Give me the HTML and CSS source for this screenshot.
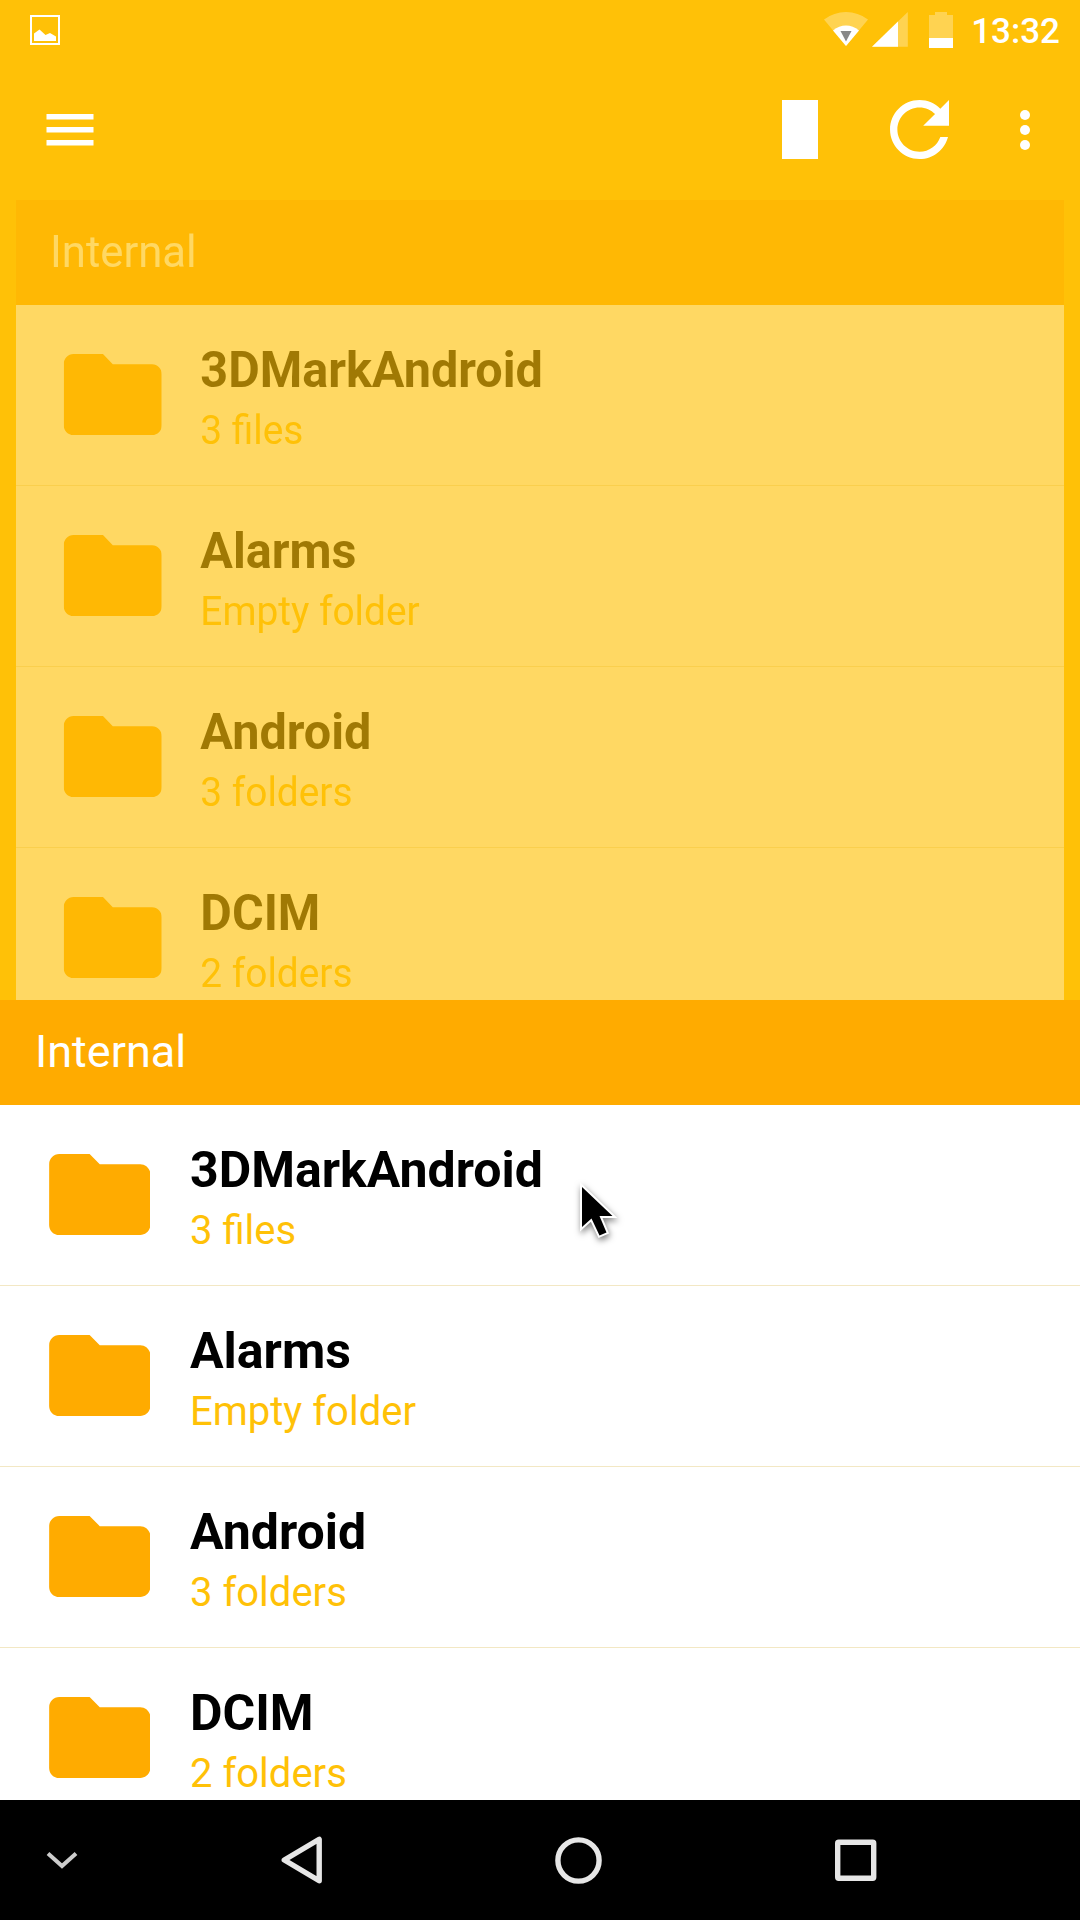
FILE: index.html
```
<!DOCTYPE html>
<html lang="en">

<head>
    <meta charset="UTF-8">
    <title>Internal</title>
    <link rel="stylesheet" href="styles.css">
</head>

<body>
    <!-- shared icons -->
    <svg class="defs" width="0" height="0">
        <symbol id="folder" viewBox="2 4 20 16">
            <path d="M10 4H4c-1.1 0-1.99.9-1.99 2L2 18c0 1.1.9 2 2 2h16c1.1 0 2-.9 2-2V8c0-1.1-.9-2-2-2h-8l-2-2z" />
        </symbol>
    </svg>

    <div class="screen">
        <header class="top">
            <div class="status-bar">
                <svg class="picture" width="30" height="30" viewBox="0 0 30 30">
                    <rect x="1" y="1" width="28" height="28" fill="none" stroke="#fff" stroke-width="2" />
                    <path d="M4 26V18.500L9.500 14.500L15.500 20L20 18L26 21.500V26Z" fill="#fff" />
                </svg>
                <svg class="signals" width="131" height="38" viewBox="823 11 131 38">
                    <path class="dim" d="M824 19.500Q834 12 846 12T868 19.500L846 46Z" />
                    <path class="lit" d="M833 30.500Q839 25.500 846 25.500T859 30.500L846 46Z" />
                    <path fill="#888" d="M840.500 31H851.500L846 41.500Z" />
                    <path class="dim" d="M872 46.800L907.800 12V46.800Z" />
                    <path class="lit" d="M872 46.800L898 21.500V46.800Z" />
                    <path class="dim" d="M929 15h6v-3h12v3h6v23h-24Z" />
                    <path class="lit" d="M929 38h24v10h-24Z" />
                </svg>
                <span class="clock">13:32</span>
            </div>
            <div class="app-bar">
                <svg class="menu" width="48" height="34" viewBox="0 0 48 34">
                    <path d="M0.500 1h47v5.500h-47zM0.500 14h47v5.500h-47zM0.500 27h47v5.500h-47z" />
                </svg>
                <span class="block"></span>
                <svg class="refresh" width="59" height="59" viewBox="4 4 16 16">
                    <path d="M17.650 6.350C16.200 4.900 14.210 4 12 4c-4.420 0-7.990 3.580-7.990 8s3.570 8 7.990 8c3.730 0 6.840-2.550 7.730-6h-2.080c-.82 2.330-3.040 4-5.650 4-3.310 0-6-2.690-6-6s2.690-6 6-6c1.660 0 3.140.69 4.220 1.780L13 11h7V4l-2.350 2.350z" />
                </svg>
                <svg class="dots" width="10" height="40" viewBox="0 0 10 40">
                    <circle cx="5" cy="5" r="5" />
                    <circle cx="5" cy="20" r="5" />
                    <circle cx="5" cy="35" r="5" />
                </svg>
            </div>
        </header>

        <!-- old list fading out behind -->
        <section class="panel panel-back">
            <h2>Internal</h2>
            <ul>
                <li><svg class="folder"><use href="#folder" /></svg><div><b>3DMarkAndroid</b><p>3 files</p></div></li>
                <li><svg class="folder"><use href="#folder" /></svg><div><b>Alarms</b><p>Empty folder</p></div></li>
                <li><svg class="folder"><use href="#folder" /></svg><div><b>Android</b><p>3 folders</p></div></li>
                <li><svg class="folder"><use href="#folder" /></svg><div><b>DCIM</b><p>2 folders</p></div></li>
            </ul>
        </section>

        <!-- new list sliding in -->
        <section class="panel">
            <h2>Internal</h2>
            <ul>
                <li><svg class="folder"><use href="#folder" /></svg><div><b>3DMarkAndroid</b><p>3 files</p></div></li>
                <li><svg class="folder"><use href="#folder" /></svg><div><b>Alarms</b><p>Empty folder</p></div></li>
                <li><svg class="folder"><use href="#folder" /></svg><div><b>Android</b><p>3 folders</p></div></li>
                <li><svg class="folder"><use href="#folder" /></svg><div><b>DCIM</b><p>2 folders</p></div></li>
            </ul>
        </section>

        <nav class="nav-bar">
            <svg class="hide" width="32" height="18" viewBox="46 1852 32 18">
                <path d="M48 1854.500L62 1867L76 1854.500" />
            </svg>
            <svg class="back" width="42" height="50" viewBox="281 1836 42 50">
                <path d="M319.200 1840.300V1881.700L284.300 1861Z" />
            </svg>
            <svg class="home" width="48" height="48" viewBox="0 0 48 48">
                <circle cx="23.500" cy="24.500" r="20.600" />
            </svg>
            <svg class="recent" width="42" height="44" viewBox="0 0 42 44">
                <rect x="2.700" y="4.200" width="36" height="36" rx="1" />
            </svg>
        </nav>

        <svg class="cursor" width="50" height="66" viewBox="574 1178 50 66">
            <path d="M582 1187V1227L591.500 1218.500L599.500 1235.500L606.500 1232.500L599.500 1216H612.500Z" />
        </svg>
    </div>
</body>

</html>
```
FILE: styles.css
```
* {
    box-sizing: border-box;
}

body {
    margin: 0;
    background: #ffc107;
    font-family: Roboto, sans-serif;
}

.defs {
    position: absolute;
}

.screen {
    position: relative;
    width: 1080px;
    height: 1920px;
    display: flex;
    flex-direction: column;
    overflow: hidden;
    background: #ffc107;
}

/* Status bar + toolbar */
.top {
    height: 200px;
    flex: none;
    color: #fff;
    fill: #fff;
}

.status-bar {
    height: 60px;
    display: flex;
    align-items: center;
    padding: 0 20px 0 30px;
}

.signals {
    margin-left: auto;
}

.dim {
    fill: #fff;
    opacity: 0.3;
}

.lit {
    fill: #fff;
}

.clock {
    margin-left: 17px;
    padding-top: 4px;
    font-size: 35px;
    font-weight: 500;
    line-height: 60px;
}

.app-bar {
    height: 139px;
    display: flex;
    align-items: center;
    padding: 0 50px 0 46px;
}

.block {
    width: 36px;
    height: 59px;
    margin-left: auto;
    background: #fff;
}

.refresh {
    margin-left: 72px;
}

.dots {
    margin-left: 71px;
}

/* Folder list */
.panel {
    height: 800px;
    flex: none;
    overflow: hidden;
    background: #fff;
}

.panel-back {
    opacity: 0.37;
    transform: scaleX(0.9704);
}

.panel h2 {
    height: 105px;
    margin: 0;
    padding-left: 35px;
    background: #ffab00;
    color: #fff;
    font-size: 45px;
    font-weight: 400;
    line-height: 103px;
}

.panel ul {
    margin: 0;
    padding: 0;
    list-style: none;
}

.panel li {
    height: 181px;
    display: flex;
    align-items: flex-start;
    padding: 36px 0 0 48.5px;
    border-bottom: 1px solid #f3e8c4;
}

.folder {
    width: 101.5px;
    height: 81px;
    margin: 13px 40px 0 0;
    fill: #ffab00;
}

.panel b {
    display: block;
    color: #000;
    font-size: 50px;
    line-height: 58px;
}

.panel p {
    margin: 0;
    color: #ffc107;
    font-size: 40px;
    line-height: 64px;
}

/* Navigation bar */
.nav-bar {
    height: 120px;
    flex: none;
    display: flex;
    align-items: center;
    padding-left: 46px;
    background: #000;
}

.nav-bar svg {
    fill: none;
    stroke: #e6e6e6;
    stroke-width: 5.4;
    stroke-linejoin: round;
}

.nav-bar .hide {
    stroke: #ccc;
    stroke-width: 4;
    stroke-linejoin: miter;
}

.back {
    margin-left: 203px;
}

.home {
    margin-left: 232px;
}

.recent {
    margin-left: 232px;
}

/* Mouse pointer */
.cursor {
    position: absolute;
    left: 574px;
    top: 1178px;
    fill: #000;
    stroke: #fff;
    stroke-width: 4;
    paint-order: stroke;
    filter: drop-shadow(1px 3px 3px rgba(0, 0, 0, 0.5));
}
```
